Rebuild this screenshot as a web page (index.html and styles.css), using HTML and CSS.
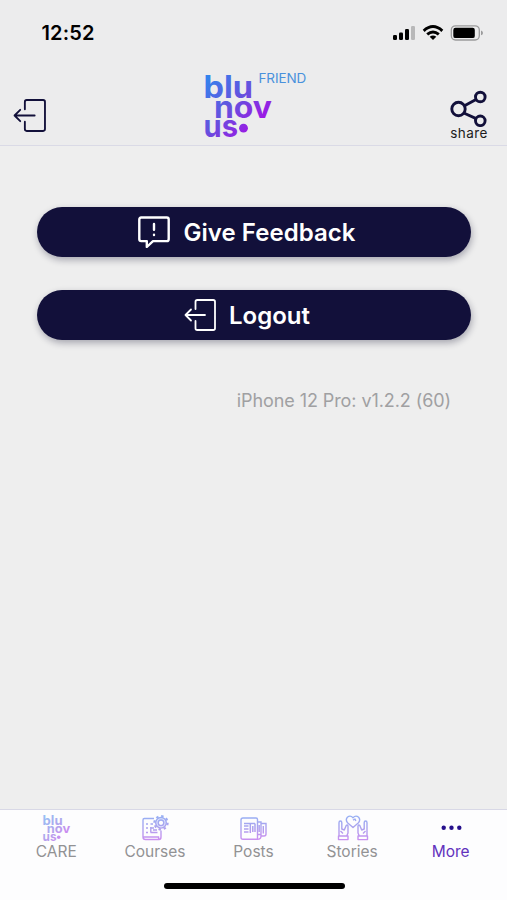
FILE: index.html
```html
<!DOCTYPE html>
<html lang="en">
<head>
<meta charset="utf-8">
<meta name="viewport" content="width=device-width">
<title>More</title>
<link rel="stylesheet" href="styles.css">
</head>
<body>
<svg width="0" height="0" class="defs" aria-hidden="true">
  <defs>
    <linearGradient id="brand" gradientUnits="userSpaceOnUse" x1="4" y1="8" x2="58" y2="60">
      <stop offset="0" stop-color="#3383ed"/><stop offset=".5" stop-color="#6650de"/><stop offset="1" stop-color="#a80de6"/>
    </linearGradient>
    <linearGradient id="soft" gradientUnits="userSpaceOnUse" x1="10" y1="0" x2="12" y2="28">
      <stop offset="0" stop-color="#92b2f5"/><stop offset=".5" stop-color="#aca2ee"/><stop offset="1" stop-color="#d08cf0"/>
    </linearGradient>
    <symbol id="exit" viewBox="0 0 32 32">
      <path d="M11.5 10V2.8Q11.5 1 13.3 1H29.2Q31 1 31 2.8V29.2Q31 31 29.2 31H13.3Q11.5 31 11.5 29.2V22M21 16H1.5M7 10.5L1.5 16L7 21.5" fill="none" stroke="currentColor" stroke-linecap="round" stroke-linejoin="round"/>
    </symbol>
    <symbol id="logo" viewBox="0 0 72 68">
      <g font-family="Inter, sans-serif" font-weight="700" font-size="31" fill="url(#brand)">
        <text x="1.5" y="27.3" textLength="49.5" lengthAdjust="spacingAndGlyphs">blu</text>
        <text x="12" y="46.8" textLength="58" lengthAdjust="spacingAndGlyphs">nov</text>
        <text x="1.5" y="66.3" textLength="34.5" lengthAdjust="spacingAndGlyphs">us</text>
      </g>
      <circle cx="41.5" cy="57.2" r="4.4" fill="url(#brand)"/>
    </symbol>
  </defs>
</svg>
<div class="screen">
  <div class="status">
    <span class="time">12:52</span>
    <svg class="indicators" width="92" height="18" viewBox="0 0 92 18">
      <rect x="1" y="11" width="4" height="5" rx="1.2"/><rect x="7" y="8.5" width="4" height="7.5" rx="1.2"/><rect x="13" y="5" width="4" height="11" rx="1.2"/><rect x="19" y="2" width="4" height="14" rx="1.2" fill="#b8b8b9"/>
      <g fill="none" stroke="#000" stroke-width="2.9"><path d="M31.7 6.8Q41 -1.6 50.3 6.8"/><path d="M35.2 10.4Q41 5.4 46.8 10.4"/></g>
      <path d="M37.7 12.7Q41 10.2 44.3 12.7L41 16Z"/>
      <rect x="59.3" y="1.8" width="28" height="14.2" rx="4.2" fill="none" stroke="#9b9b9c" stroke-width="1.3"/>
      <rect x="61.3" y="3.8" width="21.5" height="10.3" rx="2.2"/><path d="M89 6.5Q91 7.2 91 8.9T89 11.3Z" fill="#9b9b9c"/>
    </svg>
  </div>
  <header class="header">
    <svg class="back" width="33" height="33"><use href="#exit"/></svg>
    <div class="brand">
      <svg width="72" height="68"><use href="#logo"/></svg>
      <span class="friend">FRIEND</span>
    </div>
    <div class="share">
      <svg width="38" height="37" viewBox="0 0 38 37" fill="none" stroke="#12103a" stroke-width="2.9">
        <circle cx="8.5" cy="19" r="6.7"/><circle cx="30.3" cy="7" r="4.8"/><circle cx="30.3" cy="30.8" r="4.8"/><path d="M14.5 15.8L26 9.4M13.8 23L26.2 28.6"/>
      </svg>
      <span>share</span>
    </div>
  </header>
  <main class="content">
    <button class="pill feedback">
      <svg width="32" height="32" viewBox="0 0 32 32" fill="none" stroke="#fff" stroke-width="2.4" stroke-linejoin="round" stroke-linecap="round">
        <path d="M3.2 1.5H28.8Q30.7 1.5 30.7 3.4V23.2Q30.7 25.1 28.8 25.1H15L8.8 31V25.1H3.2Q1.3 25.1 1.3 23.2V3.4Q1.3 1.5 3.2 1.5Z"/><path d="M16 8V13.8M16 18.8V19"/>
      </svg>
      <span>Give Feedback</span>
    </button>
    <button class="pill">
      <svg class="logout" width="32" height="32"><use href="#exit"/></svg>
      <span>Logout</span>
    </button>
    <p class="version">iPhone 12 Pro: v1.2.2 (60)</p>
  </main>
  <footer class="tabbar">
    <nav class="tabs">
      <a class="tab"><svg class="faded" width="29" height="28" viewBox="0 0 72 68"><use href="#logo"/></svg><span>CARE</span></a>
      <a class="tab"><svg width="28" height="28" viewBox="0 0 28 28" fill="none" stroke="url(#soft)" stroke-width="1.4">
        <path d="M13 4.5H3.3Q2 4.5 2 6V23Q2 25.5 4.5 25.5H18Q20 25.5 20 23V16.5M2.5 23H17.5Q17.5 25.5 19 25.5M5 10H7M5 14H7M5 18.5H7M9.5 10H12M9.5 14H13M9.5 18.5H16.5M9.8 13V18.5M12 16H16"/>
        <circle cx="20" cy="8.8" r="5.3" fill="#dfe4fc"/><circle cx="20" cy="8.8" r="2.8" fill="#fdfdfe"/><circle cx="20" cy="8.8" r="6.6" stroke-width="2.2" stroke-dasharray="2.4 2.78"/>
      </svg><span>Courses</span></a>
      <a class="tab"><svg width="28" height="28" viewBox="0 0 28 28" fill="none" stroke="url(#soft)" stroke-width="1.4">
        <path d="M4 4H17Q18.5 4 18.5 5.5V25.3H4Q2 25.3 2 23.3V6Q2 4 4 4ZM18.5 8H22V20.5H18.5M22 9.5H27V20Q27 22 25 22H22M22 20V22Q22 25.3 18.5 25.3M24.3 12V19.5M20.2 11V18"/>
        <path d="M5 9.5H16M5 12H9.5M5 15H9.5M5 18H9.5M11.3 9.5V19M13.8 12V18M16 9.5V18" stroke-width="1.5"/>
      </svg><span>Posts</span></a>
      <a class="tab"><svg class="hands" width="32" height="28" viewBox="0 0 32 28" fill="none" stroke="url(#soft)" stroke-width="1.4" stroke-linejoin="round">
        <path d="M16 13.5L10.5 8.7Q8.2 5.8 10.4 3.2Q13.3 .8 16 3.7Q18.7 .8 21.6 3.2Q23.8 5.8 21.5 8.7ZM16 6.2L18 5L18.8 7"/>
        <path id="hand" d="M2 22V8.7Q2 7 3.4 7Q4.8 7 4.8 8.7V15L7.3 16L9.2 11.5Q10.5 10.3 11 12V19L9.7 22M1.5 22H11V25.6H1.5ZM3.5 17L6 19.5"/>
        <use href="#hand" transform="translate(32 0) scale(-1 1)"/>
      </svg><span>Stories</span></a>
      <a class="tab active"><svg width="28" height="28" viewBox="0 0 28 28" fill="#26108c"><circle cx="6.7" cy="13.8" r="2.2"/><circle cx="14.5" cy="13.8" r="2.2"/><circle cx="22.3" cy="13.8" r="2.2"/></svg><span>More</span></a>
    </nav>
    <div class="home"></div>
  </footer>
</div>
</body>
</html>
```
FILE: styles.css
```css
* { box-sizing: border-box; }
body { margin: 0; font-family: Inter, "Liberation Sans", sans-serif; background: #eee; }
.defs { position: absolute; }
.screen { width: 507px; height: 900px; display: flex; flex-direction: column; overflow: hidden; }
svg { display: block; flex: none; }
.status { height: 66px; padding: 0 23px 0 41.5px; display: flex; justify-content: space-between; align-items: center; background: #ececed; }
.time { font-size: 20px; font-weight: 600; line-height: 24px; letter-spacing: .15px; }
.header { height: 80px; display: grid; grid-template-columns: 1fr auto 1fr; align-items: start; background: #ececed; border-bottom: 1px solid #dadae6; }
.back { margin: 33px 0 0 13px; color: #12103a; stroke-width: 1.8; }
.brand { display: flex; align-items: flex-start; margin: 5px 0 0 1px; width: 105px; }
.friend { font-size: 13.5px; line-height: 15px; color: #4991dc; margin-left: -15px; letter-spacing: -.1px; }
.share { justify-self: end; margin: 24px 19px 0 0; display: flex; flex-direction: column; align-items: center; font-size: 13.5px; line-height: 16px; color: #1c1c20; letter-spacing: .4px; }
.share span { margin-top: -2px; }
.content { flex: 1; padding: 61px 36px 0 37px; display: flex; flex-direction: column; gap: 33px; }
.pill { flex: none; width: 434px; height: 50px; border: 0; border-radius: 25px; background: #12103a; color: #fff; display: flex; align-items: center; justify-content: center; gap: 13px; padding: 2px 14px 0 0; font: 600 24px/30px Inter, sans-serif; box-shadow: 1px 3px 7px rgba(20, 20, 50, .33); }
.feedback { letter-spacing: .05px; }
.pill svg { margin-top: -3px; }
.logout { stroke-width: 1.8; color: #fff; }
.version { margin: 17px 20px 0 0; text-align: right; font-size: 18px; line-height: 22px; letter-spacing: -.08px; color: #a0a0a2; }
.tabbar { height: 91px; background: #fdfdfe; border-top: 1px solid #d8d8e6; display: flex; flex-direction: column; align-items: center; }
.tabs { width: 493px; height: 72.5px; padding-top: 4px; display: grid; grid-template-columns: repeat(5, 1fr); }
.tab { display: flex; flex-direction: column; align-items: center; font-size: 15.5px; line-height: 20px; color: #929294; }
.faded { opacity: .5; }
.hands { margin-left: 1px; }
.active { color: #6232bd; }
.home { width: 181px; height: 6px; margin-left: 2px; border-radius: 3px; background: #000; }
```
